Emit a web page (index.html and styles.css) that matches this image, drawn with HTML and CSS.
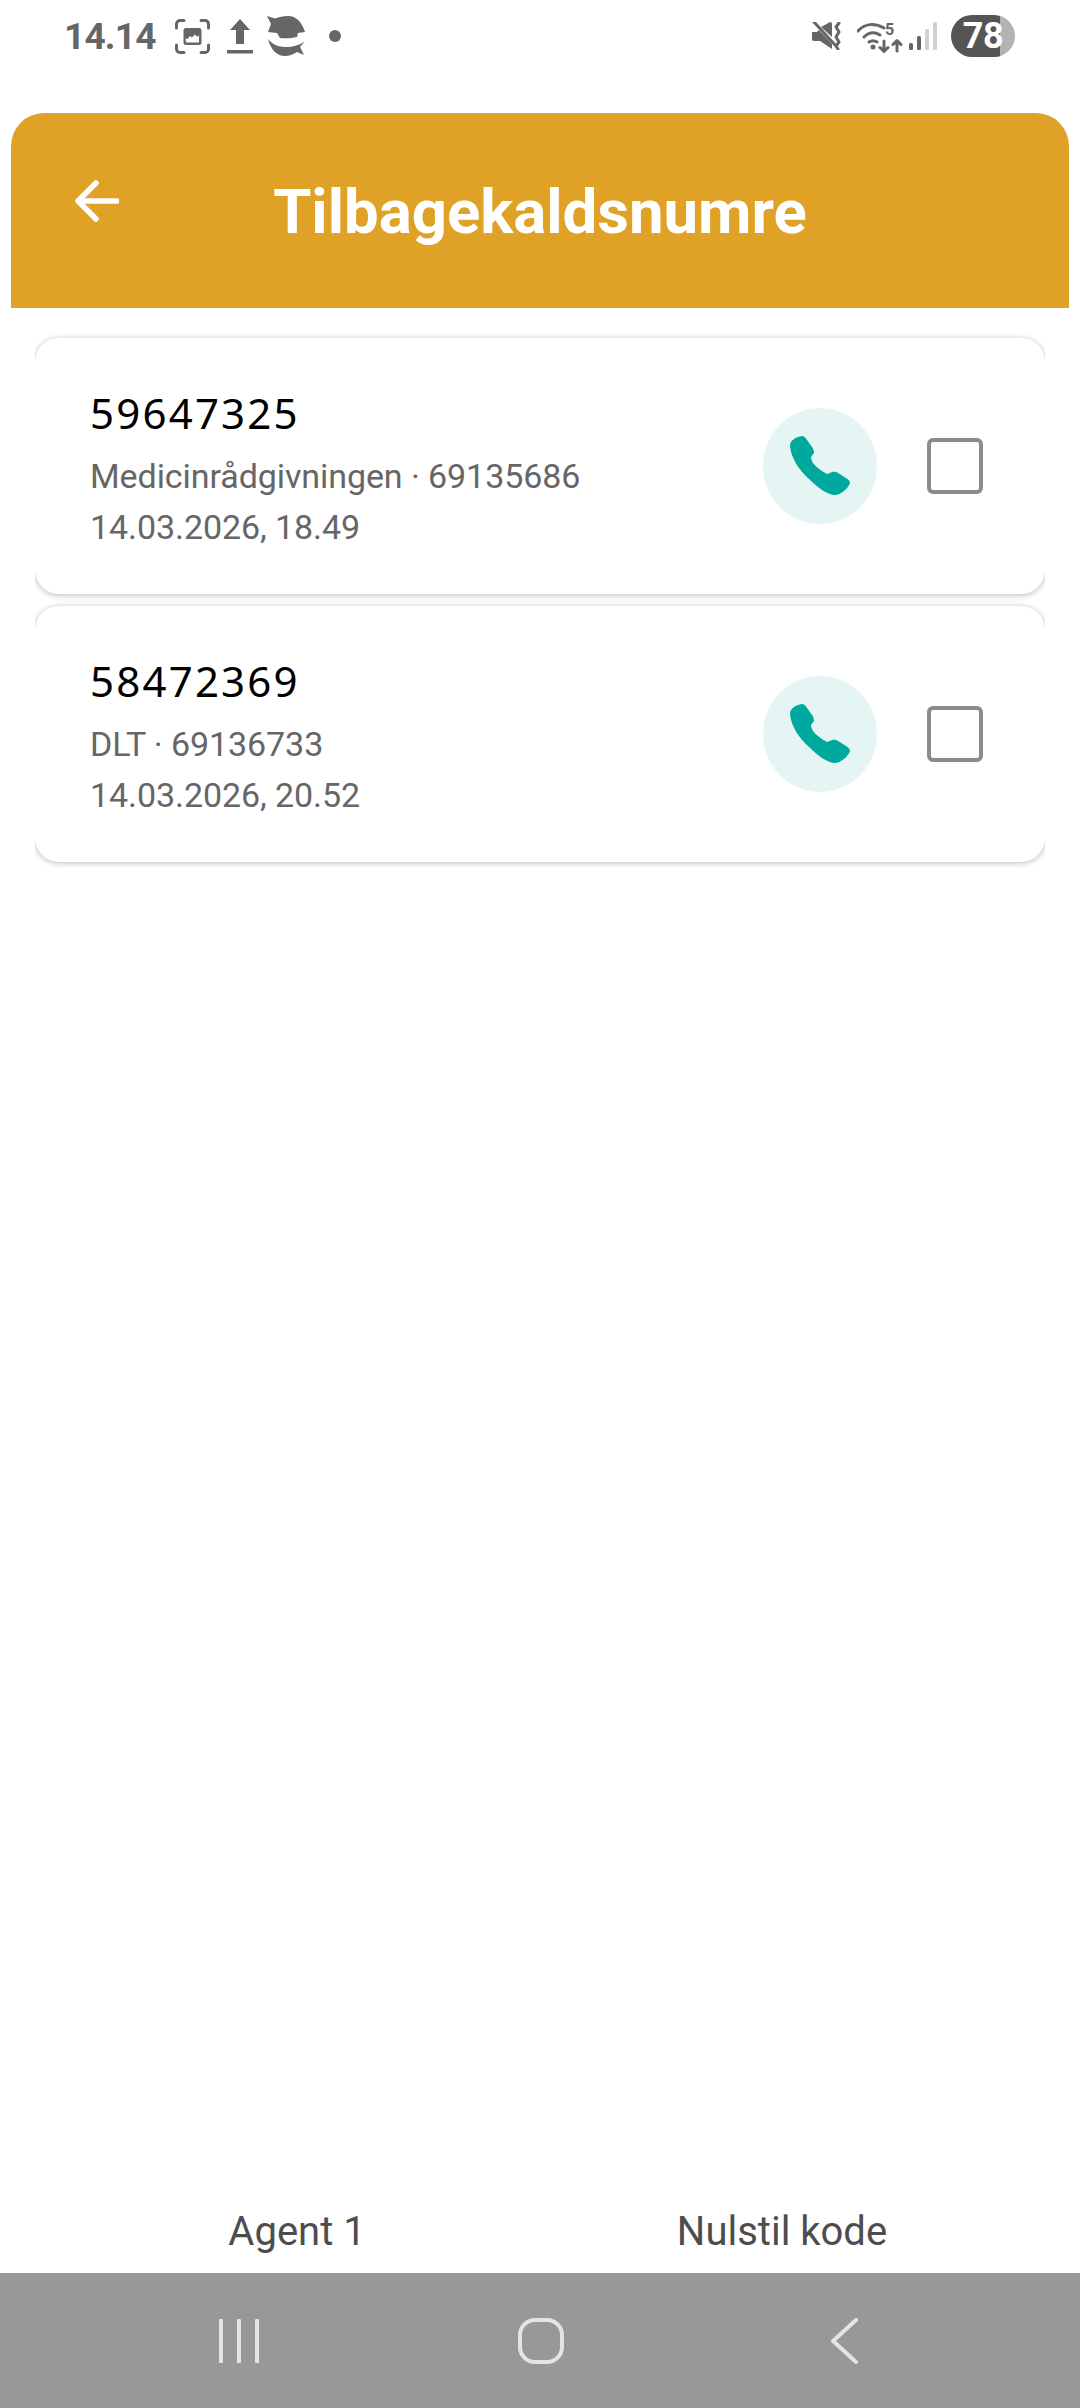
FILE: index.html
```html
<!DOCTYPE html>
<html lang="da">
<head>
<meta charset="utf-8">
<title>Tilbagekaldsnumre</title>
<link rel="stylesheet" href="styles.css">
</head>
<body>
<div class="screen">
  <div class="status">
    <div class="status-left">
      <span class="time">14.14</span>
      <svg class="i-shot" viewBox="0 0 35 35"><path class="st" d="M1.5 9V5a3.500 3.500 0 0 1 3.500-3.500H9M26 1.500h4A3.500 3.500 0 0 1 33.500 5v4M33.500 26v4a3.500 3.500 0 0 1-3.500 3.500h-4M9 33.500H5A3.500 3.500 0 0 1 1.500 30v-4"/><path class="fl" fill-rule="evenodd" d="M11 9h13a2.500 2.500 0 0 1 2.500 2.500v12A2.500 2.500 0 0 1 24 26H11a2.500 2.500 0 0 1-2.500-2.500v-12A2.500 2.500 0 0 1 11 9zM11 23.500h13V16l-1.500 2-2.500-2.500-3 3-2-1.500-2.500 3-2-.500z"/></svg>
      <svg class="i-up" viewBox="0 0 26 35"><path class="fl" d="M13 0l10 11h-6v14H9V11H3zM0 31h26v3.500H0z"/></svg>
      <svg class="i-fish" viewBox="0 0 40 41"><path class="fl" d="M0 0l8 2.500C12 1 16 0 21 0c8 0 14 6 17 16l-7 1-1 4c-6 1.500-12 1.500-17 1l-3-5-9-1 3-8z"/><path class="fl" d="M1 23c4 5 10 8 17 8 8 0 15-2 20-6l-5 6 4 8-7-3c-4 2.500-8 4-12 4-8 0-14-6-17-17z"/></svg>
      <span class="dot"></span>
    </div>
    <div class="status-right">
      <svg class="i-mute" viewBox="0 0 29 28"><path class="fl" d="M0 10h5l2-2 13 14v5L8 19H2a2 2 0 0 1-2-2zM9 5l9-5a2 2 0 0 1 2 2v13z"/><path class="st2" d="M2 0l22 24M27 1l-3 4 3 5-3 5 3 5-3 4 2 3"/></svg>
      <svg class="i-wifi" viewBox="0 -4 46 37"><path class="st2" d="M1 9C8 1 18 1 27 6M7 15c5-5 11-5 16-2M12 20c3-2 5-2 8 0"/><circle class="fl" cx="16" cy="25" r="2.500"/><text class="five" x="28" y="13">5</text><path class="st2" d="M27 19v10M23 25.500l4 4 4-4M40 29V19M36 22.500l4-4 4 4"/></svg>
      <svg class="i-sig" viewBox="0 0 28 28"><rect class="b-on" x="0" y="21" width="4" height="7" rx="1.500"/><rect class="b-on" x="8" y="14" width="4" height="14" rx="1.500"/><rect class="b-off" x="16" y="7" width="4" height="21" rx="1.500"/><rect class="b-off" x="24" y="0" width="4" height="28" rx="1.500"/></svg>
      <div class="battery"><span class="battery-num">78</span></div>
    </div>
  </div>

  <header class="appbar">
    <svg class="back" viewBox="0 0 44 42"><path d="M42 21H3M21 3L3 21l18 18"/></svg>
    <h1 class="title">Tilbagekaldsnumre</h1>
  </header>

  <main class="list">
    <article class="card">
      <div class="info">
        <div class="number">59647325</div>
        <div class="meta">Medicinrådgivningen · 69135686</div>
        <div class="meta">14.03.2026, 18.49</div>
      </div>
      <button class="call"><svg viewBox="0 0 60 60"><path d="M12 0C6 1 0 4 0 10c1 12 9 24 19 33 9 9 19 16 26 16 5 0 13-6 15-12 0-2-2-4-4-5l-8-5c-3-2-6-1-8 0l-3 1c-4-2-11-7-14-11-1-2-2-4-2-6l3-4c0-2-1-5-2-6l-5-7c-1-2-3-4-5-4z"/></svg></button>
      <span class="check"></span>
    </article>
    <article class="card">
      <div class="info">
        <div class="number">58472369</div>
        <div class="meta">DLT · 69136733</div>
        <div class="meta">14.03.2026, 20.52</div>
      </div>
      <button class="call"><svg viewBox="0 0 60 60"><path d="M12 0C6 1 0 4 0 10c1 12 9 24 19 33 9 9 19 16 26 16 5 0 13-6 15-12 0-2-2-4-4-5l-8-5c-3-2-6-1-8 0l-3 1c-4-2-11-7-14-11-1-2-2-4-2-6l3-4c0-2-1-5-2-6l-5-7c-1-2-3-4-5-4z"/></svg></button>
      <span class="check"></span>
    </article>
  </main>

  <footer class="actions">
    <span class="action">Agent 1</span>
    <span class="action">Nulstil kode</span>
  </footer>

  <nav class="navbar">
    <svg class="nav-recent" viewBox="0 0 40 44"><path d="M2 1.500v41M20 1.500v41M38 1.500v41"/></svg>
    <svg class="nav-home" viewBox="0 0 46 46"><rect x="2" y="2" width="42" height="42" rx="15"/></svg>
    <svg class="nav-back" viewBox="0 0 28 46"><path d="M26 2L3 23l23 21"/></svg>
  </nav>
</div>
</body>
</html>
```
FILE: styles.css
```css
* { box-sizing: border-box; }
html, body { margin: 0; padding: 0; background: #fff; }
.screen {
  width: 1080px;
  height: 2408px;
  display: flex;
  flex-direction: column;
  font-family: Roboto, "Liberation Sans", sans-serif;
  overflow: hidden;
}

/* status bar */
.status {
  height: 113px;
  padding: 15px 65px 0 64px;
  display: flex;
  justify-content: space-between;
  align-items: flex-start;
}
.status-left, .status-right { display: flex; align-items: center; height: 42px; }
.time { font-size: 37px; font-weight: 700; color: #666; width: 111px; letter-spacing: -.8px; }
.status svg { display: block; flex: none; }
.fl { fill: #666; }
.st { fill: none; stroke: #666; stroke-width: 3; stroke-linecap: round; }
.st2 { fill: none; stroke: #666; stroke-width: 3; stroke-linecap: round; stroke-linejoin: round; }
.i-shot { width: 35px; height: 35px; }
.i-up { width: 26px; height: 35px; margin-left: 17px; }
.i-fish { width: 40px; height: 41px; margin-left: 14px; }
.dot { width: 12px; height: 12px; border-radius: 50%; background: #666; margin-left: 22px; }
.i-mute { width: 29px; height: 28px; }
.i-wifi { width: 46px; height: 37px; margin-left: 16px; }
.five { font-family: Roboto, sans-serif; font-size: 16px; font-weight: 700; fill: #666; }
.i-sig { width: 28px; height: 28px; margin-left: 6px; }
.b-on { fill: #666; }
.b-off { fill: #d0d0d0; }
.battery {
  width: 64px;
  height: 42px;
  margin-left: 14px;
  border-radius: 21px;
  background: linear-gradient(90deg, #555 0 49px, #b3b3b3 49px);
  display: flex;
  align-items: center;
  justify-content: center;
}
.battery-num { color: #fff; font-size: 36px; font-weight: 700; letter-spacing: -.5px; }

/* app bar */
.appbar {
  position: relative;
  height: 195px;
  margin: 0 11px;
  background: #dfa126;
  border-radius: 33px 33px 0 0;
  display: flex;
  align-items: center;
  justify-content: center;
}
.back {
  position: absolute;
  left: 64px;
  top: 67px;
  width: 44px;
  height: 42px;
  fill: none;
  stroke: #fff;
  stroke-width: 5.500;
  stroke-linecap: round;
  stroke-linejoin: round;
}
.title { margin: 4px 0 0; color: #fff; font-size: 61.700px; font-weight: 700; line-height: 1; }

/* list */
.list {
  margin: 24px 35px 0;
  padding: 6px 0;
  overflow: hidden;
  display: flex;
  flex-direction: column;
  gap: 12px;
}
.card {
  height: 256px;
  background: #fff;
  border-radius: 24px;
  box-shadow: 0 1px 6px rgba(0,0,0,.28);
  display: flex;
  align-items: center;
  padding: 0 62px 0 55px;
}
.info { flex: 1; min-width: 0; padding-top: 6px; }
.number {
  font-family: "Noto Sans", sans-serif;
  font-size: 42px;
  letter-spacing: 2.200px;
  line-height: 56px;
  color: #000;
  margin-bottom: 10px;
}
.meta { font-size: 34px; line-height: 51px; color: #666; letter-spacing: -.08px; }
.call {
  width: 114px;
  height: 116px;
  padding: 0;
  border: 0;
  border-radius: 50%;
  background: #e4f5f4;
  display: flex;
  align-items: center;
  justify-content: center;
  margin-right: 50px;
}
.call svg { width: 60px; height: 60px; fill: #00a99d; display: block; }
.check {
  width: 56px;
  height: 56px;
  border: 4px solid #8c8c8c;
  border-radius: 6px;
  flex: none;
}

/* footer */
.actions {
  flex: 1;
  display: flex;
  align-items: flex-end;
  padding-bottom: 19px;
  color: #4d4d4d;
  font-size: 40px;
}
.action { line-height: 44px; text-align: center; }
.action:first-child { width: 594px; }
.action:last-child { width: 376px; }

/* nav bar */
.navbar {
  height: 135px;
  background: #989898;
  display: flex;
  align-items: center;
  padding: 0 222px 0 219px;
}
.navbar svg { display: block; fill: none; stroke: #e4e4e4; stroke-width: 4; stroke-linecap: round; stroke-linejoin: round; }
.nav-recent { width: 40px; height: 44px; }
.nav-home { width: 46px; height: 46px; margin-left: 259px; }
.nav-back { width: 28px; height: 46px; margin-left: auto; }
```
